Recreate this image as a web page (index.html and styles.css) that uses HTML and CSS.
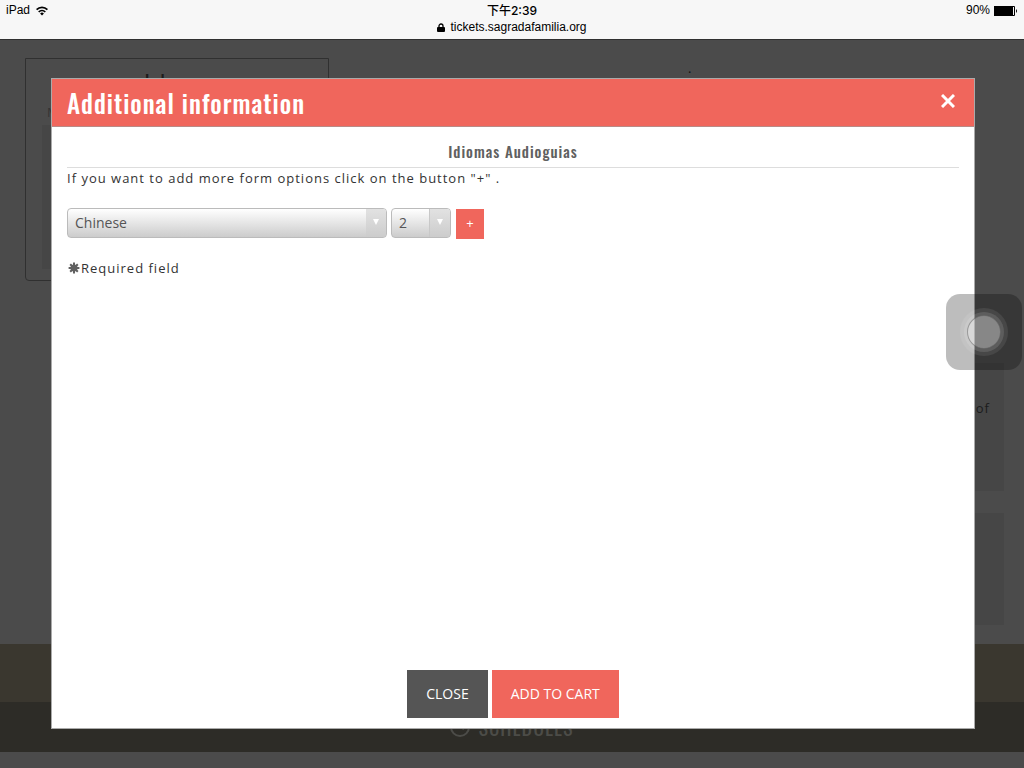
FILE: index.html
```html
<!DOCTYPE html>
<html lang="en">
<head>
<meta charset="utf-8">
<meta name="viewport" content="width=device-width, initial-scale=1">
<title>Additional information</title>
<link rel="stylesheet" href="styles.css">
</head>
<body>
<header class="status">
  <div class="status-row">
    <span class="status-left">iPad
      <svg width="12" height="10" viewBox="0 0 12 10" aria-hidden="true"><g fill="none" stroke="#000" stroke-width="1.7"><path d="M.6 3.7a7.6 7.6 0 0 1 10.8 0"/><path d="M2.7 6a4.7 4.7 0 0 1 6.6 0"/></g><path d="M6 9.4 4.1 7.5a2.7 2.7 0 0 1 3.8 0z"/></svg>
    </span>
    <time class="status-time">下午2:39</time>
    <span class="status-right">90%
      <svg width="24" height="10" viewBox="0 0 24 10" aria-hidden="true"><path d="M0 0h19v10H0z"/><path d="M19 .5h1.5v9H19" fill="none" stroke="#000"/><path d="M22 3q2 2 0 4z"/></svg>
    </span>
  </div>
  <div class="address">
    <svg width="8" height="9" viewBox="0 0 8 9" aria-hidden="true"><rect y="4" width="8" height="5" rx="1"/><path d="M2 4.5V3a2 2 0 0 1 4 0v1.5" fill="none" stroke="#000" stroke-width="1.3"/></svg>
    tickets.sagradafamilia.org
  </div>
</header>
<div class="page">
  <main class="content">
    <section class="calendar">
      <div class="month">
        <svg width="11" height="12" viewBox="0 0 11 12" aria-hidden="true"><path d="M11 0v12L0 6z"/></svg>
        <span class="month-name">July <small>2016</small></span>
        <svg width="11" height="12" viewBox="0 0 11 12" aria-hidden="true"><path d="M0 0v12l11-6z"/></svg>
      </div>
      <span class="weekday">M</span>
      <div class="days"></div>
    </section>
    <p class="dot">.</p>
    <aside class="cards">
      <div class="card card-tall">of</div>
      <div class="card"></div>
    </aside>
  </main>
  <div class="band"></div>
  <footer class="schedules">
    <svg width="20" height="20" viewBox="0 0 20 20" fill="none" stroke="#4c4c48" stroke-width="2" aria-hidden="true"><circle cx="10" cy="10" r="9"/><path d="M10 4v6l4 2"/></svg>
    SCHEDULES
  </footer>
  <div class="overlay">
    <section class="modal" role="dialog" aria-labelledby="modal-title">
      <header class="modal-head">
        <h1 class="modal-title" id="modal-title">Additional information</h1>
        <button class="dismiss" type="button" aria-label="Dismiss">
          <svg width="14" height="14" viewBox="0 0 14 14" fill="none" stroke="#fff" stroke-width="3" aria-hidden="true"><path d="m1 1 12 12M13 1 1 13"/></svg>
        </button>
      </header>
      <form class="form">
        <h2 class="subtitle">Idiomas Audioguias</h2>
        <p class="hint">If you want to add more form options click on the button "+" .</p>
        <div class="options">
          <span class="picker picker-language"><select class="select" aria-label="Language"><option>Chinese</option></select></span>
          <span class="picker"><select class="select" aria-label="Quantity"><option>2</option></select></span>
          <button class="add" type="button">+</button>
        </div>
        <p class="required"><svg width="12" height="12" viewBox="0 0 12 12" stroke="#606060" stroke-width="2" aria-hidden="true"><circle cx="6" cy="6" r="2.5" fill="#606060"/><path d="M6 .6v10.8M.6 6h10.8M2.2 2.2l7.6 7.6M9.8 2.2 2.2 9.8"/></svg>Required field</p>
      </form>
      <footer class="actions">
        <button class="action" type="button">CLOSE</button>
        <button class="action action-primary" type="button">ADD TO CART</button>
      </footer>
    </section>
  </div>
</div>
<button class="assistive" type="button" aria-label="Assistive menu"><span class="assistive-ring"></span></button>
</body>
</html>
```
FILE: styles.css
```css
:root { --heading: Oswald, "Roboto Condensed", Roboto, sans-serif; }
* { box-sizing: border-box; }
body {
  margin: 0;
  min-height: 100vh;
  display: flex;
  flex-direction: column;
  background: #4b4b4b;
  color: #333;
  font: 13px/18px "Open Sans", "Noto Sans", sans-serif;
}
h1, h2, p { margin: 0; }
button { border: 0; padding: 0; font: inherit; cursor: pointer; }
svg { flex: none; }

.status {
  padding: 2px 6px 3px;
  background: #f7f7f7;
  border-bottom: 1px solid #303030;
  color: #000;
  font: 12px/17px "Liberation Sans", "Noto Sans CJK TC", sans-serif;
}
.status-row { display: grid; grid-template-columns: 1fr auto 1fr; }
.status-left, .status-right { display: flex; align-items: center; gap: 6px; }
.status-right { justify-content: flex-end; gap: 4px; }
.status-time { font-family: Inter, "Noto Sans CJK TC", sans-serif; font-weight: 500; }
.address { display: flex; justify-content: center; align-items: center; gap: 5px; }

.page { position: relative; flex: 1; display: flex; flex-direction: column; padding-bottom: 16px; }
.content { flex: 1; display: flex; align-items: flex-start; padding: 18px 20px 0 25px; }
.calendar {
  width: 304px;
  height: 223px;
  padding: 10px 16px;
  border: 1px solid #303030;
  border-radius: 0 0 4px 4px;
  color: #1c1c1c;
}
.month { display: flex; justify-content: space-between; align-items: center; padding: 0 10px; }
.month svg { fill: #363636; }
.month-name { font: 20px/26px var(--heading); letter-spacing: 1px; }
.month-name small { font-size: 14px; color: #333; }
.weekday { display: block; padding: 5px 5px 4px; color: #333; }
.days { height: 144px; background: #464646; }
.dot { flex: 1; padding-left: 359px; line-height: 20px; color: #111; }
.cards { display: flex; flex-direction: column; gap: 22px; width: 220px; padding-top: 305px; }
.card { height: 112px; padding: 36px 14px; background: #464646; color: #1c1c1c; text-align: right; letter-spacing: 1px; }
.card-tall { height: 128px; }
.band { height: 58px; background: #3a372f; }
.schedules {
  display: flex;
  justify-content: center;
  align-items: center;
  gap: 8px;
  height: 50px;
  background: #2d2c27;
  color: #4c4c48;
  font: 20px/24px var(--heading);
  letter-spacing: 1px;
}

.overlay { position: absolute; inset: 0; display: flex; padding: 38px 49px 39px 51px; }
.modal { flex: 1; display: flex; flex-direction: column; background: #fff; border: 1px solid #aaa; }
.modal-head {
  display: flex;
  justify-content: space-between;
  align-items: center;
  height: 48px;
  padding: 0 19px 0 15px;
  background: #f0665c;
  border-bottom: 1px solid #b98a86;
}
.modal-title { color: #fff; font: 500 25px/40px var(--heading); letter-spacing: 1px; }
.dismiss { display: flex; padding: 0 0 3px; background: none; }
.form { flex: 1; padding: 14px 15px; }
.subtitle {
  padding-bottom: 6px;
  border-bottom: 1px solid #ddd;
  color: #606060;
  font: 500 15px/20px var(--heading);
  letter-spacing: 1px;
  text-align: center;
}
.hint { padding: 1px 0; letter-spacing: 1px; }
.options { display: flex; gap: 4px; padding: 20px 0; }
.picker { position: relative; display: flex; width: 60px; height: 30px; }
.picker-language { width: 320px; }
.select {
  appearance: none;
  width: 100%;
  padding: 0 28px 0 7px;
  border: 1px solid #bbb;
  border-radius: 4px;
  background: linear-gradient(#fff, #ccc);
  color: #555;
  font: 14px/20px "Open Sans", "Noto Sans", sans-serif;
}
.picker::before {
  content: "";
  position: absolute;
  inset: 1px 1px 1px auto;
  width: 20px;
  border-left: 1px solid #c8c8c8;
  border-radius: 0 3px 3px 0;
  background: linear-gradient(#e2e2e2, #ccc);
  pointer-events: none;
}
.picker-language::before { border-left: 0; }
.picker::after {
  content: "";
  position: absolute;
  top: 11px;
  right: 8px;
  border: solid transparent;
  border-width: 6px 3px 0;
  border-top-color: #fff;
  pointer-events: none;
}
.add { width: 28px; height: 30px; margin: 1px 0 -1px 1px; padding-bottom: 2px; background: #f0665c; color: #fff; }
.required { display: flex; align-items: center; gap: 1px; padding: 1px; letter-spacing: 1px; }
.actions { display: flex; justify-content: center; gap: 4px; padding-bottom: 10px; }
.action { padding: 14px 19px; background: #555; color: #fff; font-size: 14px; line-height: 20px; }
.action-primary { background: #f0665c; }

.assistive {
  position: fixed;
  top: 294px;
  right: 2px;
  display: grid;
  place-items: center;
  width: 76px;
  height: 76px;
  border-radius: 14px;
  background: rgba(0, 0, 0, .26);
}
.assistive-ring {
  width: 34px;
  height: 34px;
  border-radius: 50%;
  background: rgba(255, 255, 255, .4);
  border: 1px solid rgba(60, 60, 60, .4);
  box-shadow: 0 0 0 3px rgba(255, 255, 255, .12), 0 0 0 7px rgba(255, 255, 255, .08);
}
```
